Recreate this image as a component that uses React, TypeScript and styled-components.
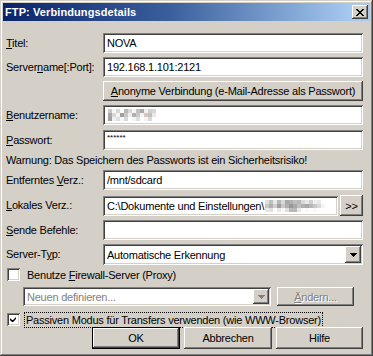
import React from 'react';
import styled, { createGlobalStyle, css } from 'styled-components';

const Global = createGlobalStyle`
    html, body {
        margin: 0;
        padding: 0;
        background: #d4d0c8;
    }
    body {
        font-family: "Liberation Sans", Arial, sans-serif;
        font-size: 11px;
        letter-spacing: -0.22px;
        color: #000;
    }
`;

const raised = css`
    box-shadow: inset -1px -1px #404040, inset 1px 1px #fff, inset -2px -2px #808080, inset 2px 2px #d4d0c8;
`;

const sunken = css`
    box-shadow: inset 1px 1px #808080, inset -1px -1px #fff, inset 2px 2px #404040, inset -2px -2px #d4d0c8;
`;

const Window = styled.div`
    width: 373px;
    height: 356px;
    box-sizing: border-box;
    padding: 3px;
    background: #d4d0c8;
    box-shadow: inset -1px -1px #404040, inset 1px 1px #d4d0c8, inset -2px -2px #808080, inset 2px 2px #fff;
    display: flex;
    flex-direction: column;
`;

const TitleBar = styled.div`
    height: 18px;
    display: flex;
    align-items: center;
    justify-content: space-between;
    padding: 0 2px 0 2px;
    background: linear-gradient(90deg, #0a246a 0%, #3a5e9c 45%, #a6caf0 95%);
`;

const Caption = styled.span`
    color: #fff;
    font-weight: bold;
    font-size: 11px;
    letter-spacing: 0.1px;
`;

const CloseButton = styled.div`
    width: 16px;
    height: 14px;
    background: #d4d0c8;
    ${raised};
    display: flex;
    align-items: center;
    justify-content: center;
`;

const Body = styled.div`
    display: flex;
    flex-direction: column;
    padding: 0 0 0 3px;
`;

const Row = styled.div<{ $mt?: number }>`
    display: grid;
    grid-template-columns: 97px 260px;
    align-items: center;
    margin-top: ${p => p.$mt ?? 4}px;
`;

const Label = styled.span`
    white-space: nowrap;
    line-height: 13px;
`;

const Edit = styled.div<{ $disabled?: boolean }>`
    height: 20px;
    box-sizing: border-box;
    background: #fff;
    ${sunken};
    padding: 0 4px;
    line-height: 20px;
    white-space: nowrap;
    overflow: hidden;
    display: flex;
    align-items: center;
    color: ${p => (p.$disabled ? '#808080' : '#000')};
`;

const Stars = styled.span`
    font-size: 8px;
    letter-spacing: 0;
    margin-top: -4px;
`;

const Button = styled.div<{ $w?: number; $h?: number; $disabled?: boolean; $default?: boolean }>`
    width: ${p => (p.$w ? `${p.$w}px` : 'auto')};
    height: ${p => p.$h ?? 20}px;
    box-sizing: border-box;
    background: #d4d0c8;
    ${raised};
    display: flex;
    align-items: center;
    justify-content: center;
    white-space: nowrap;
    flex-shrink: 0;
    color: ${p => (p.$disabled ? '#808080' : '#000')};
    text-shadow: ${p => (p.$disabled ? '1px 1px #fff' : 'none')};
    ${p =>
        p.$default &&
        css`
            box-shadow: inset 0 0 0 1px #000, inset -2px -2px #404040, inset 2px 2px #fff, inset -3px -3px #808080, inset 3px 3px #d4d0c8;
        `}
`;

const Warning = styled.div`
    margin-top: 4px;
    height: 12px;
    line-height: 12px;
`;

const SplitField = styled.div`
    display: flex;
    gap: 2px;
    align-items: center;
`;

const Mosaic = styled.span`
    display: inline-flex;
    flex-direction: column;
    margin-left: 1px;
`;

const MosaicRow = styled.span`
    display: flex;
`;

const Cell = styled.span<{ $c: string }>`
    width: 4px;
    height: 4px;
    background: ${p => p.$c};
`;

const Combo = styled(Edit)`
    height: 21px;
    padding-right: 2px;
    justify-content: space-between;
`;

const DropButton = styled.div`
    width: 16px;
    height: 17px;
    background: #d4d0c8;
    ${raised};
    display: flex;
    align-items: center;
    justify-content: center;
    flex-shrink: 0;
`;

const CheckRow = styled.div<{ $mt: number }>`
    display: flex;
    align-items: center;
    height: 13px;
    margin-top: ${p => p.$mt}px;
    padding-left: 1px;
`;

const Box = styled.div`
    width: 13px;
    height: 13px;
    box-sizing: border-box;
    background: #fff;
    ${sunken};
    display: flex;
    align-items: center;
    justify-content: center;
    flex-shrink: 0;
`;

const CheckLabel = styled.span<{ $focus?: boolean }>`
    margin-left: ${p => (p.$focus ? 4 : 6)}px;
    padding: 1px ${p => (p.$focus ? 1 : 0)}px;
    line-height: 12px;
    border: 1px dotted ${p => (p.$focus ? '#000' : 'transparent')};
    white-space: nowrap;
`;

const ProxyRow = styled.div`
    display: flex;
    align-items: center;
    margin-top: 6px;
    padding-left: 17px;
    gap: 6px;
`;

const ProxyCombo = styled(Combo)`
    width: 248px;
    height: 19px;
`;

const SmallDrop = styled(DropButton)`
    height: 15px;
`;

const Footer = styled.div`
    display: flex;
    justify-content: flex-end;
    gap: 4px;
    margin-top: 1px;
    padding-right: 7px;
`;

const mosaicA = [
    ['#c8c8c8', '#f4f4f4', '#d8d8d8', '#fff', '#b8b8b8', '#d8d8d8', '#f4f4f4', '#c0c0c0', '#a8a8a8', '#f0f0f0', '#d0d0d0', '#d8d8d8'],
    ['#a8a8a8', '#d8d8d8', '#f4f4f4', '#a0a0a0', '#c8c8c8', '#f0f0f0', '#b0b0b0', '#c8c8c8', '#f4f4f4', '#d8c8c0', '#c0c0c0', '#e8e8e8'],
    ['#a0a0a0', '#f0f0f0', '#e0e0e0', '#f8f8f8', '#d8d8d8', '#fff', '#f4f4f4', '#e0e0e0', '#fff', '#f4f4f4', '#d8d8d8', '#fff'],
];

const mosaicB = [
    ['#e0e0e0', '#c0c0c0', '#e8e8e8', '#b8b8b8', '#d8d8d8', '#a8a8a8', '#b0b0b0', '#c0c0c0', '#b8b8b8', '#d8d8d8', '#e8e8e8', '#d0d0d0', '#f0f0f0', '#e8e8e8', '#fff'],
    ['#c8c8c8', '#b0b0b0', '#d0d0d0', '#a0a0a0', '#c8c8c8', '#b0b0b0', '#989898', '#a8a8a8', '#c0c0c0', '#b0b0b0', '#a8a8a8', '#b8b8b8', '#c8c8c8', '#d8d8d8', '#f4f4f4'],
    ['#e8e8e8', '#e0e0e0', '#fff', '#e8e8e8', '#f8f8f8', '#e0e0e0', '#b8b8b8', '#b8b8b8', '#e8e8e8', '#fff', '#f8f8f8', '#fff', '#f8f8f8', '#fff', '#fff'],
];

function Blur({ cells }: { cells: string[][] }): JSX.Element {
    return (
        <Mosaic>
            {cells.map((r, i) => (
                <MosaicRow key={i}>
                    {r.map((c, j) => <Cell key={j} $c={c} />)}
                </MosaicRow>
            ))}
        </Mosaic>
    );
}

function Arrow({ color = '#000' }: { color?: string }): JSX.Element {
    return (
        <svg width="7" height="4" viewBox="0 0 7 4">
            <path d="M0 0h7v1H0zM1 1h5v1H1zM2 2h3v1H2zM3 3h1v1H3z" fill={color} />
        </svg>
    );
}

export default function App(): JSX.Element {
    return (
        <>
            <Global />
            <Window>
                <TitleBar>
                    <Caption>FTP: Verbindungsdetails</Caption>
                    <CloseButton>
                        <svg width="8" height="7" viewBox="0 0 8 7">
                            <path d="M0 0h2v1H0zM6 0h2v1H6zM1 1h2v1H1zM5 1h2v1H5zM2 2h4v1H2zM3 3h2v1H3zM2 4h4v1H2zM1 5h2v1H1zM5 5h2v1H5zM0 6h2v1H0zM6 6h2v1H6z" fill="#000" />
                        </svg>
                    </CloseButton>
                </TitleBar>
                <Body>
                    <Row $mt={12}>
                        <Label><u>T</u>itel:</Label>
                        <Edit>NOVA</Edit>
                    </Row>
                    <Row>
                        <Label>Server<u>n</u>ame[:Port]:</Label>
                        <Edit>192.168.1.101:2121</Edit>
                    </Row>
                    <Row>
                        <span />
                        <Button><span><u>A</u>nonyme Verbindung (e-Mail-Adresse als Passwort)</span></Button>
                    </Row>
                    <Row>
                        <Label><u>B</u>enutzername:</Label>
                        <Edit><Blur cells={mosaicA} /></Edit>
                    </Row>
                    <Row $mt={5}>
                        <Label><u>P</u>asswort:</Label>
                        <Edit><Stars>******</Stars></Edit>
                    </Row>
                    <Warning>Warnung: Das Speichern des Passworts ist ein Sicherheitsrisiko!</Warning>
                    <Row>
                        <Label>Entferntes <u>V</u>erz.:</Label>
                        <Edit>/mnt/sdcard</Edit>
                    </Row>
                    <Row $mt={5}>
                        <Label><u>L</u>okales Verz.:</Label>
                        <SplitField>
                            <Edit style={{ flex: 1 }}>C:\Dokumente und Einstellungen\<Blur cells={mosaicB} /></Edit>
                            <Button $w={23} $h={21}>&gt;&gt;</Button>
                        </SplitField>
                    </Row>
                    <Row>
                        <Label><u>S</u>ende Befehle:</Label>
                        <Edit />
                    </Row>
                    <Row>
                        <Label>Server-T<u>y</u>p:</Label>
                        <Combo>
                            <span>Automatische Erkennung</span>
                            <DropButton><Arrow /></DropButton>
                        </Combo>
                    </Row>
                    <CheckRow $mt={3}>
                        <Box />
                        <CheckLabel>Benutze <u>F</u>irewall-Server (Proxy)</CheckLabel>
                    </CheckRow>
                    <ProxyRow>
                        <ProxyCombo $disabled>
                            <span>Neuen definieren...</span>
                            <SmallDrop><Arrow color="#808080" /></SmallDrop>
                        </ProxyCombo>
                        <Button $w={77} $h={19} $disabled><span><u>Ä</u>ndern...</span></Button>
                    </ProxyRow>
                    <CheckRow $mt={7}>
                        <Box>
                            <svg width="7" height="7" viewBox="0 0 7 7">
                                <path d="M6 0v3L3 6H2L0 4V2l2 2h1L6 1z" fill="#000" />
                            </svg>
                        </Box>
                        <CheckLabel $focus>Passiven Modus für Transfers verwenden (wie WWW-Browser)</CheckLabel>
                    </CheckRow>
                    <Footer>
                        <Button $w={88} $h={22} $default>OK</Button>
                        <Button $w={88} $h={22}>Abbrechen</Button>
                        <Button $w={87} $h={22}>Hilfe</Button>
                    </Footer>
                </Body>
            </Window>
        </>
    );
}
